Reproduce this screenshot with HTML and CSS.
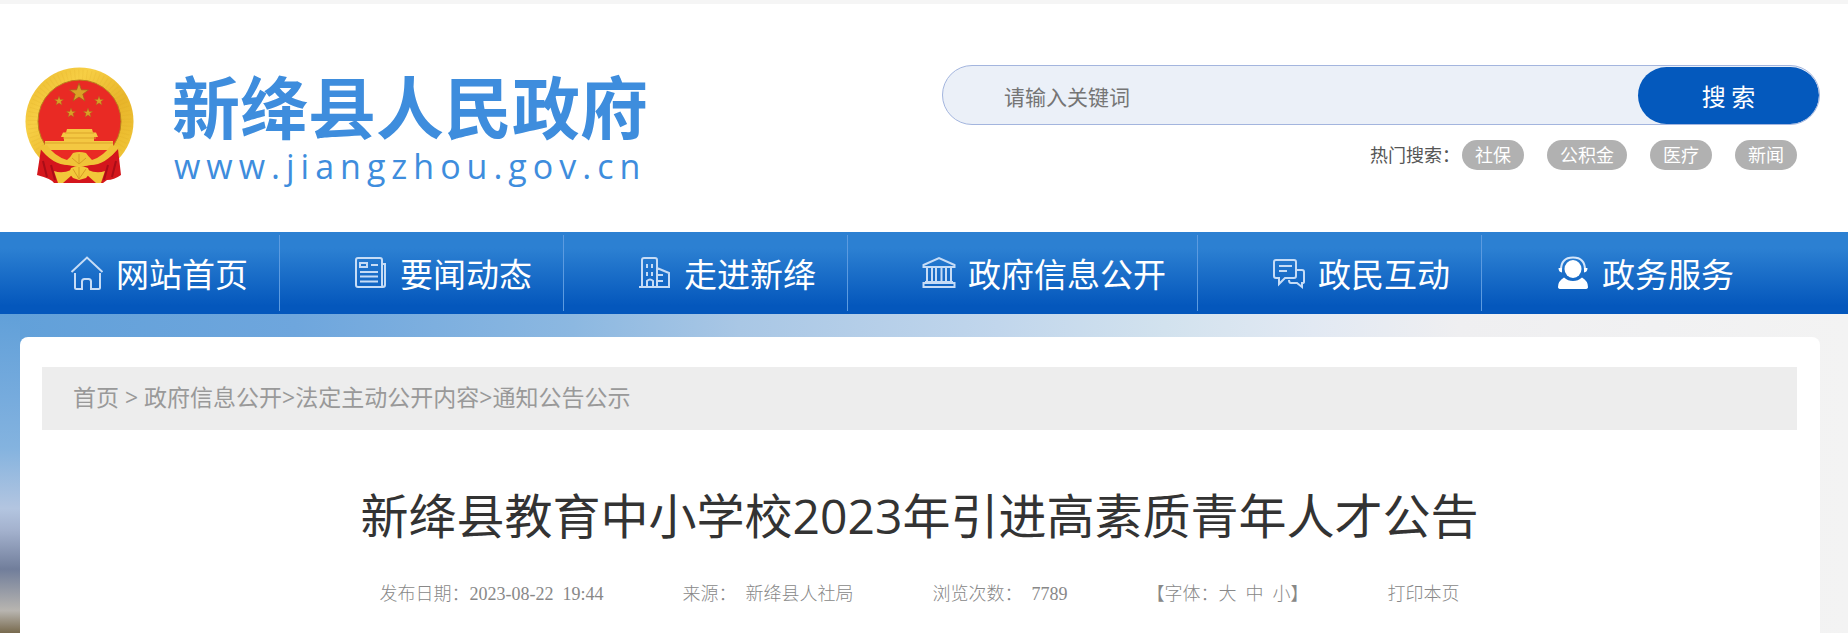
FILE: index.html
```html
<!DOCTYPE html>
<html lang="zh-CN">
<head>
<meta charset="utf-8">
<title>新绛县教育中小学校2023年引进高素质青年人才公告</title>
<link rel="stylesheet" href="styles.css">
</head>
<body>
<header class="header">
  <a class="logo" href="#">
    <svg class="emblem" viewBox="0 0 110 118" aria-hidden="true">
      <defs>
        <path id="star" d="M0-10 2.400-3.200 9.500-3.100 3.800 1.200 5.900 8.100 0 4-5.900 8.100-3.800 1.200-9.500-3.100-2.400-3.200Z"/>
        <linearGradient id="gold" x1="0" y1="0" x2="1" y2="1">
          <stop offset="0" stop-color="#e9b82c"/><stop offset=".3" stop-color="#f7cf45"/>
          <stop offset=".6" stop-color="#e8b52a"/><stop offset="1" stop-color="#f3cb3c"/>
        </linearGradient>
      </defs>
      <circle cx="54.500" cy="54.500" r="54" fill="url(#gold)"/>
      <circle cx="54.500" cy="54.500" r="47" fill="none" stroke="#d9a023" stroke-width="10" stroke-dasharray="1 3" opacity=".15"/>
      <circle cx="54.500" cy="54.500" r="41.500" fill="#e92a24" stroke="#b9801c" stroke-width="1"/>
      <g fill="#d9a126" stroke="#a8611b" stroke-width=".8">
        <use href="#star" transform="translate(54 26)"/>
        <use href="#star" transform="translate(34 34) scale(.5)"/>
        <use href="#star" transform="translate(74 34) scale(.5)"/>
        <use href="#star" transform="translate(46 46) scale(.5)"/>
        <use href="#star" transform="translate(63 46) scale(.5)"/>
      </g>
      <path d="M42 62H67L68 65.500H71L73 70H69V74H88V83H20V74H39V70H36L38 65.500H41Z" fill="#f4c842"/>
      <path d="M40 66H69M38 71H71M20 76H88" stroke="#dca52b" stroke-width="1" fill="none"/>
      <path d="M16 82Q27 95 42 98L54 100 66 98Q82 95 93 82L96 108Q89 113 82 113L78 116H29Q27 112 12 108Z" fill="#d4161c"/>
      <path d="M20 83H88Q82 91 69 93L61 86 54 84 48 86 40 93Q26 91 20 83Z" fill="#e92a24"/>
      <path d="M14 80Q28 99 45 98L54 100 64 98Q80 99 94 80L86 78Q79 89 67 93 63 89 61 86 54 84 48 86 45 91 42 93 29 89 22 78Z" fill="#f0c338"/>
      <path d="M18 94 22 110M26 98 30 113M91 94 87 110M83 98 79 113" stroke="#a90d17" stroke-width="2" fill="none"/>
      <path d="M29 104Q37 107 46 103L47 108 38 116H33ZM80 104Q72 107 63 103L62 108 71 116H76Z" fill="#f2c63a"/>
      <path d="M46 101Q54 97 63 101L65 106 61 111 54 113 48 111 44 106Z" fill="#f3c83b"/>
      <path d="M54 112 48 102M54 112V100M54 112 61 102M54 97 47 91M54 97V87M54 97 61 91" stroke="#d79e24" stroke-width="1"/>
    </svg>
    <span class="logo-text">
      <span class="site-name">新绛县人民政府</span>
      <span class="site-url">www.jiangzhou.gov.cn</span>
    </span>
  </a>
  <div class="search-area">
    <form class="search">
      <input class="search-input" type="text" placeholder="请输入关键词" aria-label="请输入关键词">
      <button class="search-button" type="button">搜 索</button>
    </form>
    <div class="hot">
      <span class="hot-label">热门搜索：</span>
      <a class="tag" href="#">社保</a>
      <a class="tag" href="#">公积金</a>
      <a class="tag" href="#">医疗</a>
      <a class="tag" href="#">新闻</a>
    </div>
  </div>
</header>
<nav class="nav">
  <a class="nav-item" href="#">
    <svg class="nav-icon" viewBox="0 0 34 34"><path d="M1.500 16 17 1.500 32.500 16M5 17V31.500Q5 33 6.500 33H12V25.500Q12 23 14.500 23H18.500Q21 23 21 25.500V33H28.500Q30 33 30 31.500V17"/></svg>
    <span class="nav-label">网站首页</span></a>
  <a class="nav-item" href="#">
    <svg class="nav-icon" viewBox="0 0 34 34"><path d="M4 2H26Q28 2 28 4V29Q28 31 30 31H4Q2 31 2 29V4Q2 2 4 2ZM28 8H31V29Q31 31 29 31M6 7H13V11H6ZM17 9H24M6 16H24M6 20.500H24M6 25.500H24"/></svg>
    <span class="nav-label">要闻动态</span></a>
  <a class="nav-item" href="#">
    <svg class="nav-icon" viewBox="0 0 34 34"><path d="M1 31H32M4 31V4Q4 2 6 2H17Q19 2 19 4V31M19 12 31 17V31M9 31V25Q12 22 15 25V31M9 8V12M14 8V12M9 16V20M14 16V20M20 19H25M20 25H25"/></svg>
    <span class="nav-label">走进新绛</span></a>
  <a class="nav-item" href="#">
    <svg class="nav-icon" viewBox="0 0 34 34"><path d="M1.500 11V9L17 2 32.500 9V11ZM5 12V25M10 12V25M14 12V25M19.500 12V25M24 12V25M29 12V25M3 26H31M1.500 31V27H32.500V31Z"/></svg>
    <span class="nav-label">政府信息公开</span></a>
  <a class="nav-item" href="#">
    <svg class="nav-icon" viewBox="0 0 34 34"><path d="M4 4H22Q24 4 24 6V20Q24 22 22 22H13L7 28V22H4Q2 22 2 20V6Q2 4 4 4ZM7 10H20M7 15H15M25 14H30Q32 14 32 16V26Q32 27 30 27V31L25 27H19Q17 27 17 24"/></svg>
    <span class="nav-label">政民互动</span></a>
  <a class="nav-item" href="#">
    <svg class="nav-icon nav-icon-solid" viewBox="0 0 34 34"><ellipse cx="17" cy="13" rx="8.500" ry="9"/><path d="M2 31Q2 25 8 21.500 12 25 17 25T26 21.500Q32 25 32 31 32 33 29 33H5Q2 33 2 31Z"/><path class="headset" d="M5 14Q5 1.500 17 1.500T29 14"/><path d="M2.500 12H6V16.500Q2.500 16 2.500 12ZM31.500 12H28V16.500Q31.500 16 31.500 12Z"/></svg>
    <span class="nav-label">政务服务</span></a>
</nav>
<main class="backdrop">
  <article class="card">
    <div class="breadcrumb"><a href="#">首页</a> &gt; <a href="#">政府信息公开</a>&gt;<a href="#">法定主动公开内容</a>&gt;<a href="#">通知公告公示</a></div>
    <h1 class="title">新绛县教育中小学校2023年引进高素质青年人才公告</h1>
    <div class="meta">
      <span>发布日期：2023-08-22&nbsp; 19:44</span>
      <span>来源：&nbsp; 新绛县人社局</span>
      <span>浏览次数：&nbsp; 7789</span>
      <span class="font-size">【字体：<a href="#">大</a><a href="#">中</a><a href="#">小</a>】</span>
      <a href="#">打印本页</a>
    </div>
  </article>
</main>
</body>
</html>
```
FILE: styles.css
```css
* { box-sizing: border-box; }
html { height: 100%; }
body {
  margin: 0;
  min-height: 100%;
  display: flex;
  flex-direction: column;
  font-family: "Open Sans", "Noto Sans CJK SC", sans-serif;
  background: #fff;
}
a { color: inherit; text-decoration: none; }

.header {
  display: flex;
  justify-content: space-between;
  align-items: flex-start;
  border-top: 4px solid #f5f5f5;
  padding: 61px 28px 45px 25px;
}
.logo { display: flex; align-items: center; gap: 37px; color: #3e8ddd; }
.emblem { width: 110px; height: 118px; flex: none; }
.logo-text { display: flex; flex-direction: column; }
.site-name {
  font: 700 68px/80px "Noto Sans CJK SC", sans-serif;
  white-space: nowrap;
}
.site-url {
  font: 34px/42px "Open Sans", sans-serif;
  letter-spacing: 6px;
  padding-left: 2px;
}

.search-area { width: 878px; }
.search {
  display: flex;
  height: 60px;
  border: 1px solid #a3b5de;
  border-radius: 30px;
  background: #ebf0f8;
  overflow: hidden;
  padding-top: 1px;
}
.search-input {
  flex: 1;
  min-width: 0;
  border: 0;
  outline: 0;
  padding: 0 0 0 61px;
  background: none;
  font: 21px/30px "Noto Sans CJK SC", sans-serif;
}
.search-input::placeholder { color: #757575; }
.search-button {
  width: 181px;
  border: 0;
  border-radius: 30px;
  background: #0459bd;
  color: #fff;
  font: 24px/36px "Noto Sans CJK SC", sans-serif;
}
.hot {
  display: flex;
  justify-content: flex-end;
  align-items: center;
  gap: 23px;
  margin-top: 15px;
  padding-right: 23px;
  font-size: 18px;
  line-height: 30px;
  color: #555;
}
.hot-label { margin-right: -21px; }
.tag {
  padding: 0 13px;
  border-radius: 15px;
  background: #b1b1b1;
  color: #fff;
}

.nav {
  display: flex;
  padding: 3px 0;
  background: linear-gradient(#2c80d2 20%, #0457bc 90%);
}
.nav-item {
  display: flex;
  align-items: center;
  gap: 12px;
  padding: 0 31px 0 74px;
  border-right: 1px solid #5c9be0;
  color: #fff;
  font-size: 33px;
  line-height: 72px;
  white-space: nowrap;
}
.nav-item:first-child { padding-left: 70px; }
.nav-item:last-child { border-right: 0; }
.nav-label { padding-top: 4px; }
.nav-icon {
  width: 34px;
  height: 34px;
  flex: none;
  fill: none;
  stroke: #c6dcf6;
  stroke-width: 2;
}
.nav-icon-solid { fill: #fff; stroke: none; }
.headset { fill: none; stroke: #d5e6fa; stroke-width: 2; }

.backdrop {
  flex: 1;
  display: flex;
  padding: 23px 28px 0 20px;
  background:
    linear-gradient(#61a0d9 0%, #76abdd 26%, #84b3df 42%, #b3c5e0 61%, #a3b1cd 68%, #717e9b 80%, #b8b5b0 93%, #786a4e 100%) left / 20px 100% no-repeat,
    linear-gradient(90deg, #61a0d9 0, #6ea6dd 16%, #8cb8e1 31%, #a9c7e5 40%, #c1d6ec 54%, #d2e2ee 63%, #e2e9f3 71%, #efeff1 79%, #f3f3f3 100%);
}
.card {
  flex: 1;
  padding: 30px 23px 0 22px;
  border-radius: 8px 8px 0 0;
  background: #fff;
}
.breadcrumb {
  padding: 14px 31px 17px;
  background: #ededed;
  color: #999;
  font-size: 23px;
  line-height: 32px;
}
.title {
  margin: 50px 0 0;
  color: #333;
  font-size: 48px;
  font-weight: 400;
  line-height: 72px;
  text-align: center;
}
.meta {
  display: flex;
  justify-content: center;
  gap: 79px;
  margin-top: 28px;
  color: #888;
  font: 18px/28px "Liberation Serif", "Noto Sans CJK SC", serif;
  font-weight: 300;
  white-space: nowrap;
}
.font-size a + a { margin-left: 9px; }
```
